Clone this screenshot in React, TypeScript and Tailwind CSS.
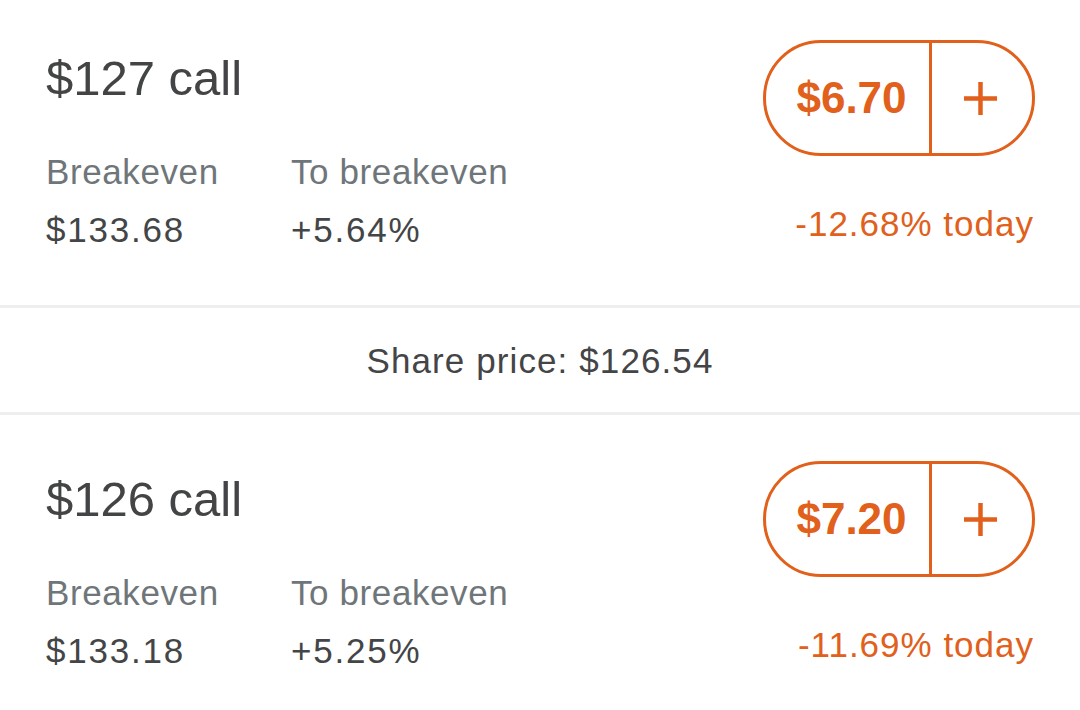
import React from "react";

type Opt = {
  strike: string;
  breakeven: string;
  toBreakeven: string;
  price: string;
  change: string;
};

function Card({ o, top }: { o: Opt; top: string }) {
  return (
    <div className={`flex justify-between pl-[46px] pr-[45px] ${top} h-[305px]`}>
      <div className="flex flex-col pt-[14px]">
        <div className="text-[49px] leading-[49px] text-[#424445]">{o.strike}</div>
        <div className="flex mt-[51px]">
          <div className="w-[245px] flex flex-col">
            <div className="text-[35px] leading-[35px] text-[#6f767a] tracking-[0.6px]">Breakeven</div>
            <div className="text-[35px] leading-[35px] text-[#434546] mt-[23px] tracking-[1.8px]">{o.breakeven}</div>
          </div>
          <div className="flex flex-col">
            <div className="text-[35px] leading-[35px] text-[#6f767a] tracking-[0.6px]">To breakeven</div>
            <div className="text-[35px] leading-[35px] text-[#434546] mt-[23px] tracking-[1.8px]">{o.toBreakeven}</div>
          </div>
        </div>
      </div>
      <div className="flex flex-col items-end">
        <div className="flex h-[116px] w-[272px] rounded-full border-[3px] border-[#e0601c]">
          <div className="flex w-[166px] items-center justify-center border-r-[3px] border-[#e0601c] pl-[8px]">
            <span className="text-[44px] font-bold leading-none text-[#e0601c]">{o.price}</span>
          </div>
          <div className="flex flex-1 items-center justify-center pr-[4px]">
            <svg width="35" height="35" viewBox="0 0 36 36">
              <path d="M18 1V35M1 18H35" stroke="#e0601c" strokeWidth="4.6" />
            </svg>
          </div>
        </div>
        <div className="mt-[50px] text-[35px] leading-[35px] text-[#e0601c] tracking-[1px] mr-[1px]">{o.change}</div>
      </div>
    </div>
  );
}

export default function App() {
  const a: Opt = { strike: "$127 call", breakeven: "$133.68", toBreakeven: "+5.64%", price: "$6.70", change: "-12.68% today" };
  const b: Opt = { strike: "$126 call", breakeven: "$133.18", toBreakeven: "+5.25%", price: "$7.20", change: "-11.69% today" };
  return (
    <div
      className="w-[1080px] h-[710px] overflow-hidden bg-white"
      style={{ fontFamily: '"Liberation Sans", Arial, sans-serif' }}
    >
      <Card o={a} top="pt-[40px]" />
      <div className="h-[3px] bg-[#eceeef]" />
      <div className="flex h-[104px] items-center justify-center">
        <span className="text-[35px] leading-[35px] text-[#434546] tracking-[1.1px]">Share price: $126.54</span>
      </div>
      <div className="h-[3px] bg-[#eceeef]" />
      <Card o={b} top="pt-[46px]" />
    </div>
  );
}
